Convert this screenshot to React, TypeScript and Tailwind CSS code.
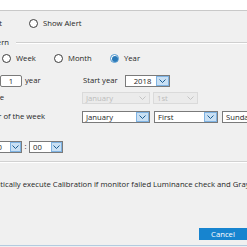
import React from "react";

const Chevron = ({ color }: { color: string }) => (
  <svg width="7" height="4" viewBox="0 0 7 4">
    <path d="M0.5 0.5L3.5 3.5L6.5 0.5" fill="none" stroke={color} strokeWidth="1" />
  </svg>
);

const Radio = ({ checked }: { checked?: boolean }) =>
  checked ? (
    <span className="w-[9px] h-[9px] rounded-full border border-[#4f97cf] bg-white flex items-center justify-center shrink-0">
      <span className="w-[6px] h-[6px] rounded-full bg-[#2a79b8]" />
    </span>
  ) : (
    <span className="w-[9px] h-[9px] rounded-full border border-[#3c3c3c] bg-white shrink-0" />
  );

const Combo = ({ text, className, btn = "w-[13px]" }: { text: string; className: string; btn?: string }) => (
  <div className={"flex h-[12px] border border-[#7a7a7a] bg-white shrink-0 " + className}>
    <span className="flex-1 pl-[3px] leading-[10px] whitespace-nowrap overflow-hidden">{text}</span>
    <span className={"h-full bg-[#c9e0f4] border border-[#7fb3e3] flex items-center justify-center shrink-0 " + btn}>
      <Chevron color="#1d5d91" />
    </span>
  </div>
);

const DisabledCombo = ({ text, className }: { text: string; className: string }) => (
  <div className={"flex h-[12px] border border-[#dadada] bg-[#ebebeb] text-[#bcbcbc] shrink-0 " + className}>
    <span className="flex-1 pl-[3px] leading-[10px] whitespace-nowrap">{text}</span>
    <span className="w-[13px] h-full flex items-center justify-center shrink-0">
      <Chevron color="#c4c4c4" />
    </span>
  </div>
);

export default function App() {
  return (
    <div className="w-[247px] h-[247px] overflow-hidden bg-[#f0f0f0] flex flex-col text-[7.7px] text-[#262626] font-['Open_Sans',sans-serif]">
      <div className="h-[11px] bg-white border-b border-[#c9c9c9] shrink-0" />

      <div className="-ml-[60px] flex flex-col">
        {/* alert mode */}
        <div className="mt-[6px] h-[14px] flex items-center">
          <div className="w-[62px] flex items-center justify-end gap-[5px] whitespace-nowrap shrink-0">
            <Radio />
            <span>Show Result</span>
          </div>
          <div className="ml-[27px] flex items-center gap-[5px] shrink-0">
            <Radio />
            <span>Show Alert</span>
          </div>
        </div>

        {/* pattern group */}
        <div className="mt-[6px] h-[12px] flex items-center">
          <span className="w-[69px] text-right whitespace-nowrap shrink-0">Pattern</span>
          <div className="flex-1 ml-[7px] h-[2px] border-t border-[#cfcfcf] border-b border-b-white" />
        </div>

        <div className="mt-[3px] h-[14px] flex items-center">
          <div className="w-[62px] flex items-center gap-[5px] shrink-0">
            <Radio />
            <span>Day</span>
          </div>
          <div className="w-[52px] flex items-center gap-[5px] shrink-0">
            <Radio />
            <span>Week</span>
          </div>
          <div className="w-[56px] flex items-center gap-[5px] shrink-0">
            <Radio />
            <span>Month</span>
          </div>
          <div className="flex items-center gap-[5px] shrink-0">
            <Radio checked />
            <span>Year</span>
          </div>
        </div>

        {/* every n years */}
        <div className="mt-[9px] h-[12px] flex items-center">
          <span className="w-[60px] pl-[10px] whitespace-nowrap shrink-0">Every</span>
          <div className="w-[22px] h-[12px] border border-[#7a7a7a] bg-white rounded-[2px] text-center leading-[10px] shrink-0">1</div>
          <span className="w-[61px] pl-[3px] shrink-0">year</span>
          <span className="w-[42px] whitespace-nowrap shrink-0">Start year</span>
          <Combo text="2018" className="w-[45px] text-center" />
        </div>

        <div className="mt-[5px] h-[12px] flex items-center">
          <span className="w-[64px] text-right whitespace-nowrap shrink-0">Date</span>
          <DisabledCombo text="January" className="ml-[78px] w-[68px]" />
          <DisabledCombo text="1st" className="ml-[3px] w-[45px]" />
        </div>

        <div className="mt-[7px] h-[12px] flex items-center">
          <span className="w-[105px] text-right whitespace-nowrap shrink-0">Order of the week</span>
          <Combo text="January" className="ml-[37px] w-[68px]" />
          <Combo text="First" className="ml-[4px] w-[64px]" />
          <Combo text="Sunday" className="ml-[4px] w-[68px]" />
        </div>

        {/* time */}
        <div className="mt-[18px] h-[12px] flex items-center">
          <span className="w-[38px] pl-[10px] shrink-0">Time</span>
          <Combo text="00" className="w-[44px] pl-[11px]" btn="w-[11px]" />
          <span className="w-[7px] text-center shrink-0">:</span>
          <Combo text="00" className="w-[34px]" btn="w-[11px]" />
        </div>

        <div className="mt-[8px] h-[2px] border-t border-[#d2d2d2] border-b border-b-white" />

        <div className="mt-[16px] h-[12px] flex items-center whitespace-nowrap">
          <span className="ml-[18px] w-[9px] h-[9px] border border-[#3c3c3c] bg-white shrink-0" />
          <span className="ml-[5px] shrink-0">Automatically execute Calibration if monitor failed Luminance check and Grayscale check</span>
        </div>

        <div className="mt-[37px] flex justify-end">
          <button className="w-[48px] h-[12px] bg-[#1784cf] text-white leading-[12px]">Cancel</button>
        </div>

        <div className="mt-[5px] h-[1px] bg-[#b2cbe0]" />
      </div>
    </div>
  );
}
